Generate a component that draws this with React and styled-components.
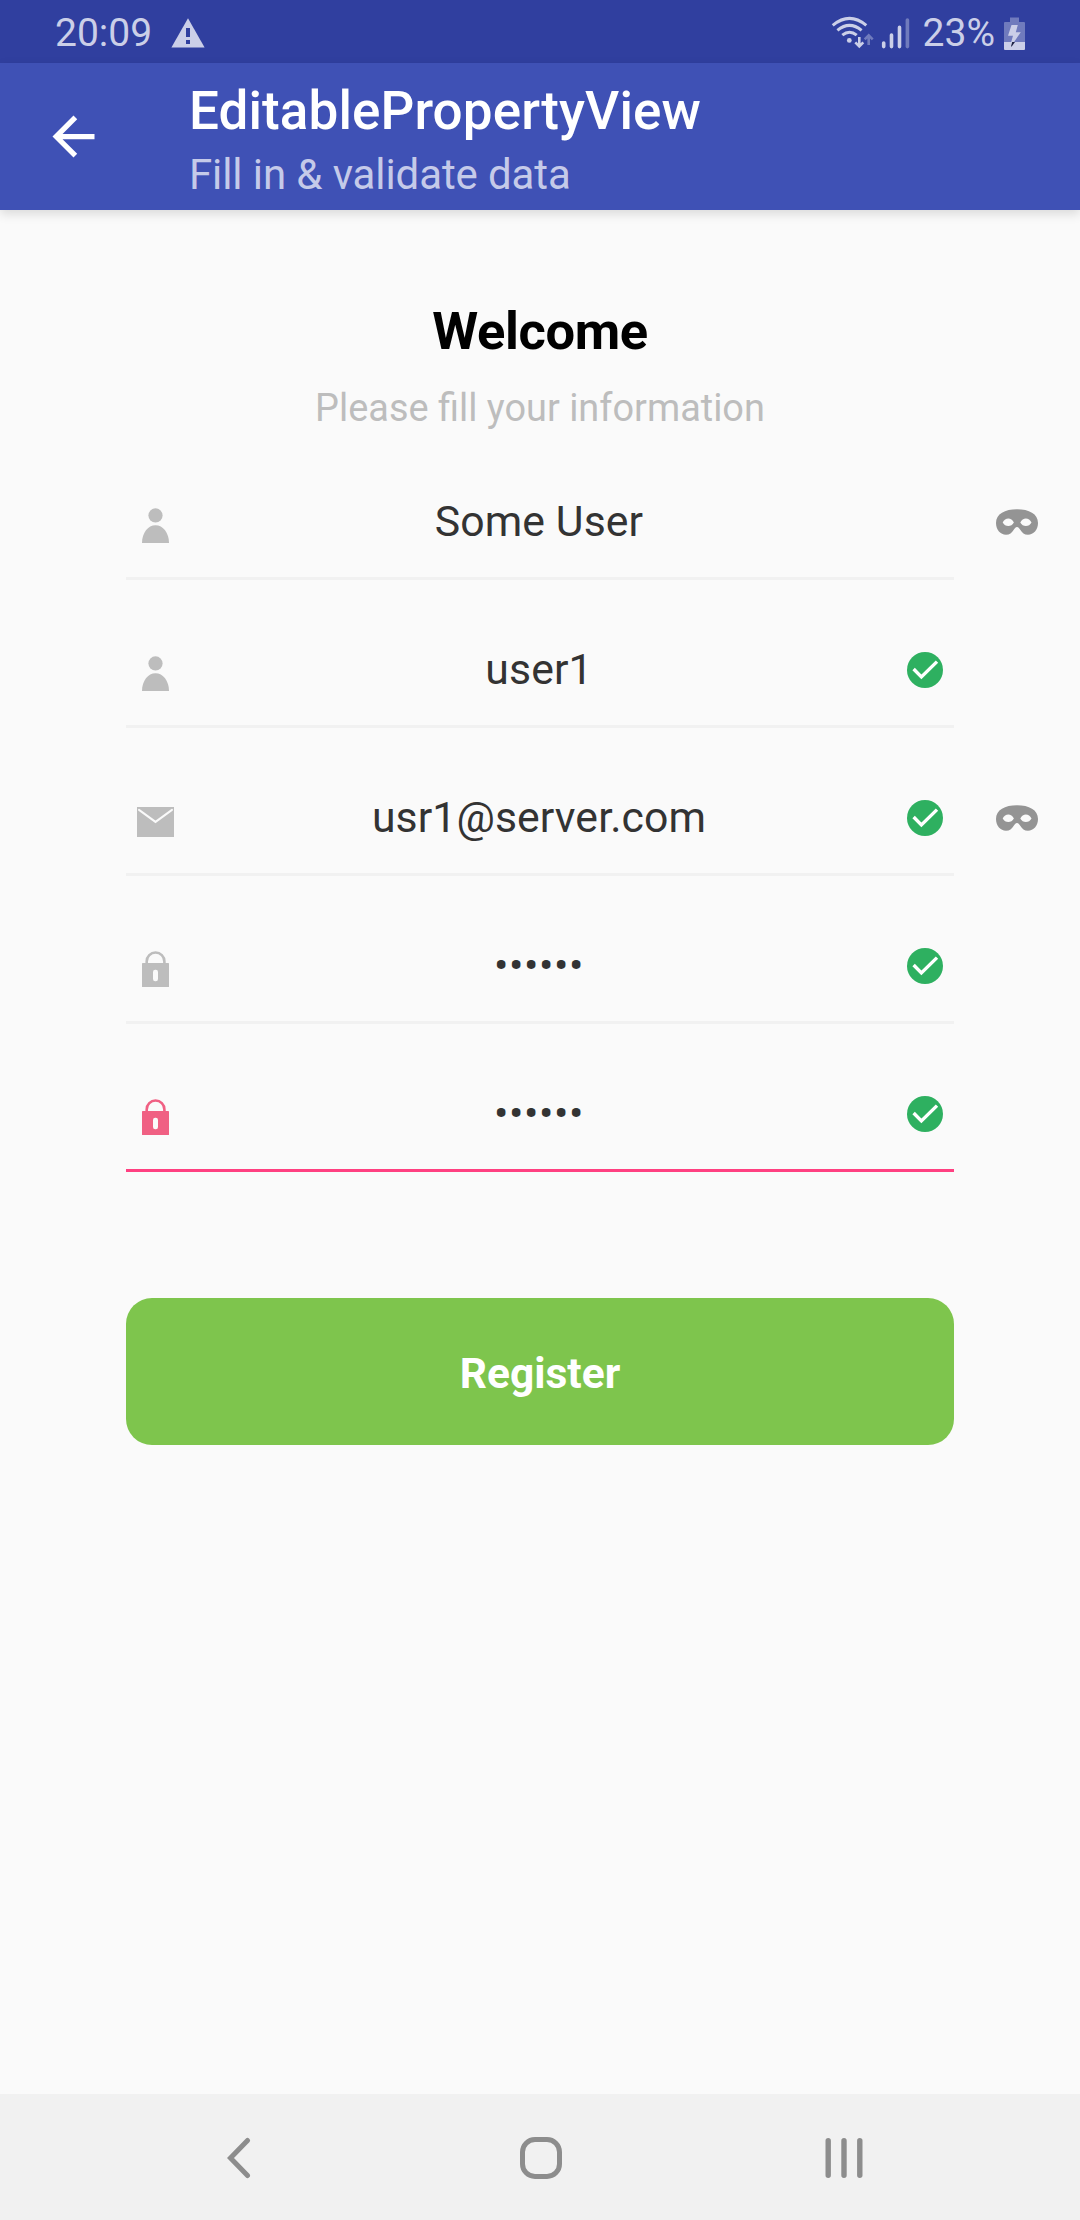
import React from "react";
import styled, { createGlobalStyle } from "styled-components";

const GlobalStyle = createGlobalStyle`
  * { box-sizing: border-box; }
  body { margin: 0; background: #fafafa; }
  svg { display: block; flex: none; }
`;

const Screen = styled.div`
  width: 1080px;
  height: 2220px;
  display: flex;
  flex-direction: column;
  background: #fafafa;
  font-family: Roboto, "Liberation Sans", sans-serif;
  overflow: hidden;
`;

const StatusBar = styled.div`
  height: 63px;
  flex: none;
  display: flex;
  align-items: center;
  justify-content: space-between;
  padding: 3px 55px 0 55px;
  background: #303f9f;
  color: #cbcfe8;
`;

const StatusGroup = styled.div`
  display: flex;
  align-items: center;
`;

const StatusText = styled.span`
  font-size: 39px;
  line-height: 60px;
  white-space: nowrap;
  margin: ${(p) => p.$margin || "0"};
`;

const AppBar = styled.header`
  height: 147px;
  flex: none;
  display: flex;
  padding-left: 42px;
  background: #3f51b5;
  box-shadow: 0 4px 10px rgba(0, 0, 0, 0.13);
`;

const BackButton = styled.button`
  width: 147px;
  height: 147px;
  padding: 0;
  border: 0;
  background: none;
  display: flex;
  align-items: center;
`;

const Titles = styled.div`
  display: flex;
  flex-direction: column;
  padding-top: 18px;
  gap: 9px;
`;

const Title = styled.h1`
  margin: 0;
  font-size: 53px;
  font-weight: 500;
  line-height: 60px;
  letter-spacing: 0.1px;
  color: #fff;
`;

const Subtitle = styled.div`
  font-size: 42px;
  line-height: 50px;
  letter-spacing: -0.1px;
  color: #c5cae9;
`;

const Content = styled.main`
  flex: 1;
  display: flex;
  flex-direction: column;
  align-items: center;
  padding-top: 91px;
`;

const Heading = styled.h2`
  margin: 0;
  font-size: 52.5px;
  font-weight: 700;
  line-height: 60px;
  letter-spacing: -0.4px;
  color: #000;
`;

const Hint = styled.p`
  margin: 25px 0 2px;
  font-size: 37.9px;
  line-height: 44px;
  color: #bdbdbd;
`;

const Row = styled.div`
  display: grid;
  grid-template-columns: 828px 126px;
  margin-left: 126px;
  height: 148px;
`;

const Field = styled.div`
  display: grid;
  grid-template-columns: 59px 1fr 58px;
  align-items: center;
  justify-items: center;
  padding-top: 35px;
  border-bottom: 3px solid ${(p) => (p.$active ? "#ff4081" : "#f1f1f1")};
  color: ${(p) => (p.$active ? "#f06083" : "#bdbdbd")};
`;

const Value = styled.span`
  font-size: 42.75px;
  line-height: 50px;
  color: #333;
  letter-spacing: ${(p) => (p.$secret ? "0.6px" : "0.1px")};
  margin: 0 3px 2px 0;
`;

const Aside = styled.div`
  display: flex;
  align-items: center;
  justify-content: center;
  padding: 35px 0 3px;
`;

const RegisterButton = styled.button`
  width: 828px;
  height: 147px;
  margin-top: 126px;
  padding: 4px 0 0;
  border: 0;
  border-radius: 26px;
  background: #7ec54d;
  color: #fff;
  font-family: inherit;
  font-size: 42.5px;
  font-weight: 700;
`;

const NavBar = styled.nav`
  height: 126px;
  flex: none;
  display: grid;
  grid-template-columns: 477px 128px 475px;
  align-items: center;
  justify-items: center;
  padding-top: 2px;
  background: #f1f1f1;

  svg:last-child { margin-left: 3px; }
`;

const Warning = () => (
  <svg width="34" height="30" viewBox="0 0 34 30">
    <path fill="currentColor" d="M17 0.3 33.6 29.5H0.4Z" />
    <path fill="#303f9f" d="M15 10h4v9h-4zM15 22h4v4h-4z" />
  </svg>
);

const Signals = () => (
  <svg width="80" height="36" viewBox="830 13 80 36" fill="none" stroke="currentColor">
    <path strokeWidth="3" d="M832.7 23.4Q849.5 9.4 866.3 23.4" />
    <path strokeWidth="3" d="M837.4 28.4Q849.5 18.4 861.6 28.4" />
    <path strokeWidth="3" d="M842.3 33.2Q849.5 27.2 856.7 33.2" />
    <circle cx="849.3" cy="38.4" r="2.4" fill="currentColor" stroke="none" />
    <path strokeWidth="2.6" d="M859.3 35v9M855.3 40.4l4 4 4-4" />
    <path strokeWidth="2.6" opacity="0.42" d="M868.7 43v-9M864.7 37.4l4-4 4 4" />
    <path strokeWidth="3.6" strokeLinecap="round" d="M883.7 41v3.6M891.5 33v11.6M899.5 25.4v19.2" />
    <path strokeWidth="3.6" strokeLinecap="round" opacity="0.42" d="M907.4 18v26.6" />
  </svg>
);

const Battery = () => (
  <svg width="21" height="33" viewBox="0 0 21 33">
    <path fill="#707bbd" d="M6 0.5h9V5h5a1 1 0 0 1 1 1v19H0V6a1 1 0 0 1 1-1h5z" />
    <path fill="currentColor" d="M0 25h21v7a1 1 0 0 1-1 1H1a1 1 0 0 1-1-1z" />
    <path fill="currentColor" d="M7.5 8h6.3l-2 7.2h5L10 25H7.2l1.8-6.3H4z" />
    <path fill="#1b2040" d="M8.2 25H11l-3.3 4.5H7z" />
  </svg>
);

const ArrowBack = () => (
  <svg width="63" height="63" viewBox="0 0 24 24" fill="#fff">
    <path d="M20 11H7.83l5.59-5.59L12 4l-8 8 8 8 1.41-1.41L7.83 13H20v-2z" />
  </svg>
);

const UserIcon = () => (
  <svg width="59" height="60" viewBox="0 0 59 60" fill="currentColor">
    <circle cx="29.5" cy="23.4" r="7.1" />
    <path d="M16 51C16 41 22 33.3 29.5 33.3S43 41 43 51Z" />
  </svg>
);

const MailIcon = () => (
  <svg width="59" height="60" viewBox="0 0 59 60">
    <path fill="currentColor" d="M11 19h37v30H11z" />
    <path fill="none" stroke="#fafafa" strokeWidth="2" strokeLinecap="round" d="M13 21.9l16.5 12 16.5-12" />
  </svg>
);

const LockIcon = () => (
  <svg width="59" height="60" viewBox="0 0 59 60">
    <path fill="none" stroke="currentColor" strokeWidth="2.6" d="M20.7 28v-2.6a8.85 8.85 0 0 1 17.7 0V28" />
    <rect x="16" y="27" width="27" height="24" rx="0.6" fill="currentColor" />
    <rect x="27" y="33.7" width="5" height="11.6" rx="2.2" fill="#fafafa" />
  </svg>
);

const CheckIcon = () => (
  <svg width="36" height="36" viewBox="0 0 36 36">
    <circle cx="18" cy="18" r="18" fill="#2eb060" />
    <path fill="none" stroke="#fff" strokeWidth="3.4" d="M6.6 17l7.8 7.9L30 9.6" />
  </svg>
);

const MaskIcon = () => (
  <svg width="42" height="26" viewBox="0 0 42 26">
    <path
      fill="#949494"
      fillRule="evenodd"
      d="M21 .3C33 .3 42 4.8 42 14 42 21 37.5 25.7 32 25.7 28.2 25.7 26.3 23.7 24.6 21.2 23.3 19.3 22.5 18 21 18S18.7 19.3 17.4 21.2C15.7 23.7 13.8 25.7 10 25.7 4.5 25.7 0 21 0 14 0 4.8 9 .3 21 .3ZM6.7 13.5C8 10.9 10 9.5 12.3 9.5S16.6 10.9 17.9 13.5C16.6 15.9 14.6 17.1 12.3 17.1S8 15.9 6.7 13.5ZM24.3 13.5C25.6 10.9 27.6 9.5 29.9 9.5S34.2 10.9 35.5 13.5C34.2 15.9 32.2 17.1 29.9 17.1S25.6 15.9 24.3 13.5Z"
    />
  </svg>
);

const NavBack = () => (
  <svg width="24" height="42" viewBox="0 0 24 42">
    <path fill="none" stroke="#8d8d8d" strokeWidth="5" strokeLinecap="round" d="M20.5 3.5L3.5 21l17 17.5" />
  </svg>
);

const NavHome = () => (
  <svg width="42" height="42" viewBox="0 0 42 42">
    <rect x="2.5" y="2.5" width="37" height="37" rx="12.5" fill="none" stroke="#8d8d8d" strokeWidth="5" />
  </svg>
);

const NavRecents = () => (
  <svg width="38" height="42" viewBox="0 0 38 42">
    <path stroke="#8d8d8d" strokeWidth="5.4" strokeLinecap="round" d="M3.2 3.7v34.6M19 3.7v34.6M34.8 3.7v34.6" />
  </svg>
);

const fields = [
  { icon: UserIcon, value: "Some User", masked: true },
  { icon: UserIcon, value: "user1", valid: true },
  { icon: MailIcon, value: "usr1@server.com", valid: true, masked: true },
  { icon: LockIcon, value: "••••••", valid: true, secret: true },
  { icon: LockIcon, value: "••••••", valid: true, secret: true, active: true },
];

export default function App() {
  return (
    <Screen>
      <GlobalStyle />
      <StatusBar>
        <StatusGroup>
          <StatusText $margin="0 19px 0 0">20:09</StatusText>
          <Warning />
        </StatusGroup>
        <StatusGroup>
          <Signals />
          <StatusText $margin="0 9px 0 13px">23%</StatusText>
          <Battery />
        </StatusGroup>
      </StatusBar>
      <AppBar>
        <BackButton aria-label="Back">
          <ArrowBack />
        </BackButton>
        <Titles>
          <Title>EditablePropertyView</Title>
          <Subtitle>Fill in &amp; validate data</Subtitle>
        </Titles>
      </AppBar>
      <Content>
        <Heading>Welcome</Heading>
        <Hint>Please fill your information</Hint>
        {fields.map(({ icon: Icon, value, valid, masked, secret, active }, i) => (
          <Row key={i}>
            <Field $active={active}>
              <Icon />
              <Value $secret={secret}>{value}</Value>
              {valid && <CheckIcon />}
            </Field>
            <Aside>{masked && <MaskIcon />}</Aside>
          </Row>
        ))}
        <RegisterButton>Register</RegisterButton>
      </Content>
      <NavBar>
        <NavBack />
        <NavHome />
        <NavRecents />
      </NavBar>
    </Screen>
  );
}
